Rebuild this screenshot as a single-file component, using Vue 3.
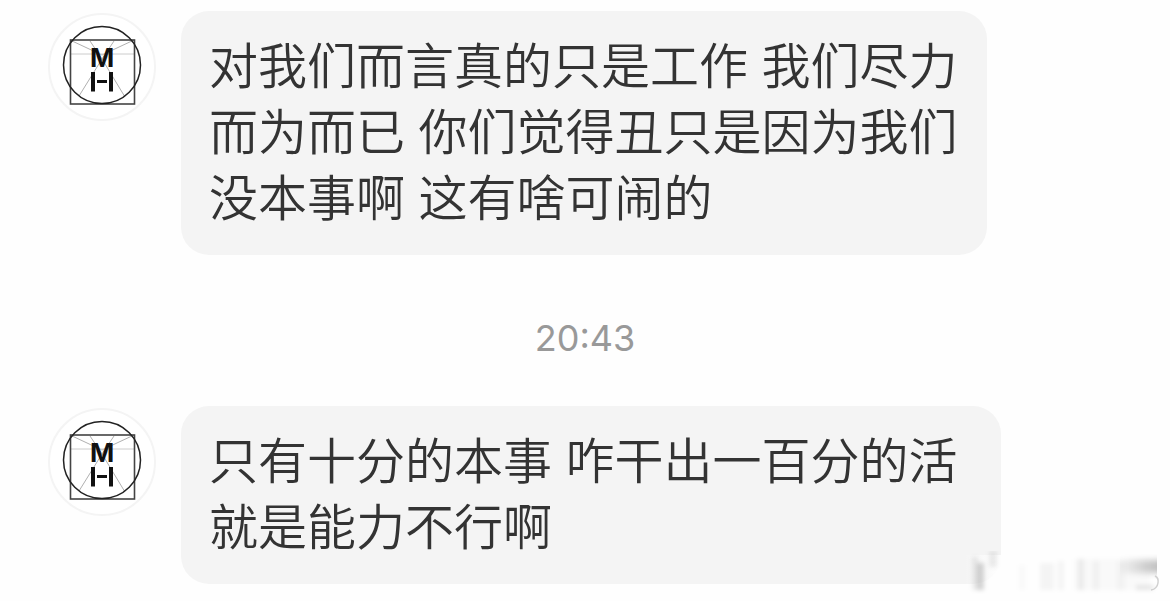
<script setup>
const entries = [
  { id: 1, kind: 'message', text: '对我们而言真的只是工作 我们尽力\n而为而已 你们觉得丑只是因为我们\n没本事啊 这有啥可闹的' },
  { id: 2, kind: 'time', text: '20:43' },
  { id: 3, kind: 'message', wide: true, text: '只有十分的本事 咋干出一百分的活\n就是能力不行啊' },
]

const streaks = [
  { x: 12, y: 6, w: 6, h: 33, o: 0.07 },
  { x: 17, y: 12, w: 7, h: 27, o: 0.16 },
  { x: 29, y: 0, w: 8, h: 16, o: 0.07 },
  { x: 59, y: 14, w: 6, h: 25, o: 0.02 },
  { x: 80, y: 12, w: 14, h: 27, o: 0.04 },
  { x: 98, y: 10, w: 6, h: 29, o: 0.04 },
  { x: 114, y: 8, w: 76, h: 31, o: 0.02 },
  { x: 118, y: 8, w: 6, h: 31, o: 0.06 },
  { x: 133, y: 10, w: 6, h: 29, o: 0.04 },
  { x: 157, y: 10, w: 8, h: 29, o: 0.03 },
  { x: 176, y: 34, w: 18, h: 5, o: 0.08 },
]
</script>

<template>
  <main class="chat">
    <template v-for="entry in entries" :key="entry.id">
      <time v-if="entry.kind === 'time'" class="time">{{ entry.text }}</time>
      <article v-else class="message">
        <svg class="avatar" viewBox="0 0 108 108" role="img" aria-label="MH">
          <circle cx="54" cy="54" r="53" fill="#fff" stroke="#f4f4f4" stroke-width="2" />
          <g fill="none" stroke="#b0b0b0" stroke-width="1">
            <path d="M22 27 54 42 86 27M42 28 54 46 31 83M66 28 54 46M54 46 77 84" />
            <path d="M22 41H86" stroke="#ccc" />
          </g>
          <rect x="22.5" y="27" width="64" height="64" fill="none" stroke="#444" stroke-width="1.6" />
          <circle cx="54" cy="52" r="38.5" fill="none" stroke="#222" stroke-width="1.5" />
          <text class="initial" x="54" y="54" text-anchor="middle">M</text>
          <g fill="#111">
            <rect x="43" y="59" width="4" height="19.5" />
            <rect x="61" y="59" width="4" height="19.5" />
            <rect x="49" y="67" width="10" height="3" />
          </g>
        </svg>
        <p class="bubble" :class="{ wide: entry.wide }">{{ entry.text }}</p>
      </article>
    </template>
    <svg class="smudge" viewBox="0 0 210 50" aria-hidden="true">
      <defs>
        <linearGradient id="fade" x1="0" x2="1" y1="0" y2="0">
          <stop offset="0" stop-color="#fefefe" stop-opacity="0" />
          <stop offset="0.18" stop-color="#fefefe" />
        </linearGradient>
        <linearGradient id="block" x1="0" x2="1" y1="0" y2="0">
          <stop offset="0" stop-color="#000" stop-opacity="0.02" />
          <stop offset="1" stop-color="#000" stop-opacity="0.24" />
        </linearGradient>
        <filter id="soft" x="-10%" y="-20%" width="120%" height="140%">
          <feGaussianBlur stdDeviation="2 2" />
        </filter>
        <filter id="softBlock" x="-10%" y="-40%" width="120%" height="180%">
          <feGaussianBlur stdDeviation="0.5 3" />
        </filter>
      </defs>
      <rect x="4" y="4" width="202" height="36" fill="url(#fade)" />
      <g filter="url(#soft)">
        <rect v-for="s in streaks" :key="`${s.x}-${s.y}`" :x="s.x" :y="s.y" :width="s.w" :height="s.h" fill="#000" :fill-opacity="s.o" />
      </g>
      <rect x="160" y="9" width="37" height="13" fill="url(#block)" filter="url(#softBlock)" />
      <path d="M195 25q4 2 3 7-1 6-7 7" fill="none" stroke="#d0d0d0" stroke-width="1.5" />
    </svg>
  </main>
</template>

<style>
body {
  margin: 0;
  background: #fefefe;
}
</style>

<style scoped>
.chat {
  position: relative;
  display: flex;
  flex-direction: column;
  box-sizing: border-box;
  min-height: 100vh;
  padding: 11px 48px 16px;
  font-family: "Liberation Sans", "Noto Sans CJK SC", sans-serif;
}
.message {
  display: flex;
  align-items: flex-start;
  gap: 25px;
}
.avatar {
  flex: none;
  width: 108px;
  height: 108px;
  margin-top: 2px;
}
.initial {
  font-family: Inter, sans-serif;
  font-size: 26px;
  font-weight: 700;
  fill: #111;
}
.bubble {
  margin: 0;
  padding: 23px 29px 23px 28px;
  border-radius: 28px;
  background: #f4f4f4;
  color: #333;
  font-size: 49px;
  font-weight: 350;
  line-height: 66px;
  white-space: pre-line;
}
.bubble.wide {
  padding-right: 43px;
}
.time {
  align-self: center;
  padding: 61px 0 46px;
  color: #999;
  font-family: Inter, sans-serif;
  font-size: 36px;
  line-height: 44px;
}
.smudge {
  position: absolute;
  right: 0;
  bottom: 0;
  width: 210px;
  height: 50px;
}
</style>
